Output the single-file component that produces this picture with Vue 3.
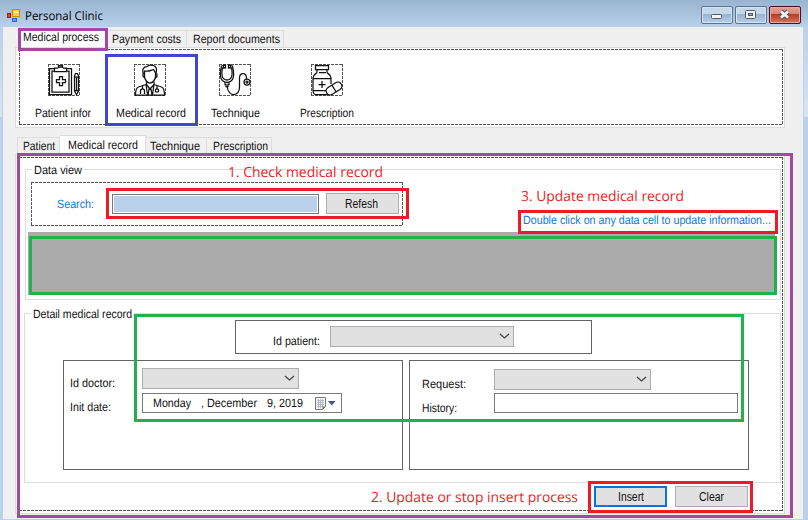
<script setup>
const mainTabs = [
  { text: 'Medical process', w: 76, cls: 'm1 active' },
  { text: 'Payment costs', w: 69, cls: 'm2' },
  { text: 'Report documents', w: 87, cls: 'm3' },
]
const subTabs = [
  { text: 'Patient', w: 32, cls: 's1' },
  { text: 'Medical record', w: 70, cls: 's2 active' },
  { text: 'Technique', w: 50, cls: 's3' },
  { text: 'Prescription', w: 55, cls: 's4' },
]

// Condenses a label horizontally so that it takes up the given width.
const vFit = {
  mounted(el, { value }) {
    const natural = el.getBoundingClientRect().width
    el.style.transform = `scaleX(${value / natural})`
    el.style.marginRight = value - natural + 'px'
  },
}
</script>

<template>
  <div class="window">
    <header class="titlebar">
      <svg class="app-icon" width="13" height="13" viewBox="0 0 13 13">
        <rect x="5.5" y=".5" width="7" height="7" fill="#ffd24a" stroke="#c98b0a" />
        <rect x="7" y="2" width="4" height="2" fill="#ffe897" />
        <rect x=".5" y="4.5" width="3" height="4" fill="#d8452f" stroke="#9d2014" />
        <rect x="5.5" y="9.5" width="4" height="3" fill="#5d9cf0" stroke="#2f66c4" />
      </svg>
      <span v-fit="78" class="title">Personal Clinic</span>
      <div class="controls">
        <div class="ctl">
          <svg width="30" height="16" viewBox="0 0 30 16"><rect x="9.5" y="7.5" width="10" height="4" rx="1" fill="#f4f4f4" stroke="#51596b" /></svg>
        </div>
        <div class="ctl">
          <svg width="30" height="16" viewBox="0 0 30 16"><rect x="9.5" y="3.5" width="10" height="8" rx="1" fill="#f4f4f4" stroke="#51596b" /><rect x="12.5" y="6.5" width="4" height="2" fill="#8fb0d2" stroke="#51596b" /></svg>
        </div>
        <div class="ctl close">
          <svg width="30" height="16" viewBox="0 0 30 16"><path d="M11 4.500l7 6M18 4.500l-7 6" stroke="#51596b" stroke-width="5" /><path d="M11 4.500l7 6M18 4.500l-7 6" stroke="#f3f3f3" stroke-width="2.8" /></svg>
        </div>
      </div>
    </header>

    <main class="client">
      <nav class="tabs main-tabs">
        <div v-for="t in mainTabs" :key="t.text" class="tab" :class="t.cls"><span v-fit="t.w">{{ t.text }}</span></div>
      </nav>
      <section class="page page-main">
        <div class="toolbar dashed">
          <div class="tool">
            <div class="icon dashed">
              <svg width="32" height="32" viewBox="0 0 32 32" class="ink">
                <path d="M7 4.500H1.500v26h22v-26H18M7 7H4v21h17V7h-3" />
                <path d="M6.500 7.500V4h3l1.500-1h3l1.500 1h3v3.500zM10.500 3V1.500h4V3" />
                <path d="M11.500 12.500h3v3h3v3h-3v3h-3v-3h-3v-3h3z" />
                <path d="M26.500 12l1-2.500h2l1 2.500v15l-2 3.500-2-3.500zM26.500 13h4M26.500 26.500h4M28.500 13v13" />
              </svg>
            </div>
            <span v-fit="56">Patient infor</span>
          </div>
          <div class="tool">
            <div class="icon dashed">
              <svg width="32" height="32" viewBox="0 0 32 32" class="ink">
                <path d="M9.500 10C7.500 5 10 2.500 13 2.500 16 0 22.500 1 22.500 6l-.5 4M10.500 9V7c4 1 7-1 9-1.500L21.500 9v3c0 4-3 7-5.500 7s-5.500-3-5.500-7zM9 9.500v3l1.500 1M23 9.500v3L21.500 14" />
                <path d="M12.500 17.500v3L16 25l4-4.500v-3M12 20.500L4.500 23C2 24 1.500 27 1.500 31h29c0-4-.5-7-3-8L20 20.500M12 20.500l1.500 10M20 20.500l-1.500 10M14 23l2 2 2-2M15 25l-1 6M17 25l1 6" />
                <path d="M8.500 22v3M6.500 30v-3c0-3 4-3 4 0v3M23 22v3" /><circle cx="23" cy="26.500" r="1.700" />
              </svg>
            </div>
            <span v-fit="70">Medical record</span>
          </div>
          <div class="tool">
            <div class="icon dashed">
              <svg width="32" height="32" viewBox="0 0 32 32" class="ink">
                <path d="M5 1.500L2.500 2C1 8 0 14 4 17q4 3 8 0c4-3 3-9 1.500-15L11 1.500M5.500 3.500L3.500 4c-1 5-1.500 9 1.500 11q3 2 6 0c3-2 2.500-6 1.500-11l-2-.5" />
                <rect x="4.500" y="1" width="2" height="3" /><rect x="9.500" y="1" width="2" height="3" />
                <path d="M6 18.500v2h1v2h2v-2h1v-2M8 22.500c1 5 3 8 6.500 8 4 0 6-3 6-8V14c0-6 7-6 7 0v1" />
                <circle cx="28" cy="18" r="3" /><circle cx="28" cy="18" r="1" />
              </svg>
            </div>
            <span v-fit="49">Technique</span>
          </div>
          <div class="tool">
            <div class="icon dashed">
              <svg width="32" height="32" viewBox="0 0 32 32" class="ink">
                <path d="M4.500 1.500h13v4h-13zM6 5.500V8c0 2-4 2-4 6v12c0 3 1 4.500 3 4.500h12M16 5.500V8c0 2 4 2 4 6v6M2 14.500h18M2 26.500h13M8 8.500h7" />
                <path d="M11 17v7M7.500 20.500h7" />
                <g transform="rotate(-32 23 24.500)"><rect x="14.500" y="20.500" width="17" height="8" rx="4" fill="#fff" /><path d="M23 20.500v8" /></g>
              </svg>
            </div>
            <span v-fit="54">Prescription</span>
          </div>
        </div>
      </section>

      <nav class="tabs sub-tabs">
        <div v-for="t in subTabs" :key="t.text" class="tab" :class="t.cls"><span v-fit="t.w">{{ t.text }}</span></div>
      </nav>
      <section class="page page-sub">
        <div class="content dashed">
          <section class="group data-view">
            <div class="legend"><span v-fit="48">Data view</span></div>
            <div class="search-row">
              <div class="search dashed">
                <label class="blue"><span v-fit="37">Search:</span></label>
                <div class="search-input"></div>
                <button class="btn"><span v-fit="33">Refesh</span></button>
              </div>
              <div class="hint blue"><span v-fit="248">Double click on any data cell to update information...</span></div>
            </div>
            <div class="grid"></div>
          </section>

          <section class="group detail">
            <div class="legend"><span v-fit="99">Detail medical record</span></div>
            <div class="patient-box">
              <label><span v-fit="47">Id patient:</span></label>
              <div class="combo wide"><svg width="11" height="7" viewBox="0 0 11 7"><path d="M1 1l4.500 4L10 1" /></svg></div>
            </div>
            <div class="panels">
              <div class="panel left">
                <div class="field">
                  <label><span v-fit="45">Id doctor:</span></label>
                  <div class="combo"><svg width="11" height="7" viewBox="0 0 11 7"><path d="M1 1l4.500 4L10 1" /></svg></div>
                </div>
                <div class="field">
                  <label><span v-fit="41">Init date:</span></label>
                  <div class="date">
                    <span v-fit="38">Monday</span>
                    <span v-fit="56">, December</span>
                    <span v-fit="36">9, 2019</span>
                    <svg width="21" height="14" viewBox="0 0 21 14">
                      <path d="M.5.5h10v9l-3 3h-7z" fill="#f5f5f5" stroke="#777" />
                      <path d="M2 3.500h7M2 5.500h7M2 7.500h7M2 9.500h5M3.500 2v9M5.500 2v9M7.500 2v8" stroke="#a9b2c0" stroke-width=".8" />
                      <path d="M7.500 12.500v-3h3z" fill="#666" />
                      <path d="M13 4h7.500l-3.700 4.500z" fill="#42578c" />
                    </svg>
                  </div>
                </div>
              </div>
              <div class="panel right">
                <div class="field">
                  <label><span v-fit="44">Request:</span></label>
                  <div class="combo"><svg width="11" height="7" viewBox="0 0 11 7"><path d="M1 1l4.500 4L10 1" /></svg></div>
                </div>
                <div class="field">
                  <label><span v-fit="35">History:</span></label>
                  <div class="textbox"></div>
                </div>
              </div>
            </div>
          </section>

          <div class="actions">
            <button class="btn primary"><span v-fit="26">Insert</span></button>
            <button class="btn"><span v-fit="25">Clear</span></button>
          </div>
        </div>
      </section>
    </main>

    <div class="mark purple mark-process"></div>
    <div class="mark indigo mark-tool"></div>
    <div class="mark purple mark-page"></div>
    <div class="mark red mark-search"></div>
    <div class="mark red mark-hint"></div>
    <div class="mark green mark-grid"></div>
    <div class="mark green mark-form"></div>
    <div class="mark red mark-actions"></div>
    <div class="note note-1"><span v-fit="155">1. Check medical record</span></div>
    <div class="note note-2"><span v-fit="207">2. Update or stop insert process</span></div>
    <div class="note note-3"><span v-fit="163">3. Update medical record</span></div>
  </div>
</template>

<style>
body { margin: 0; overflow: hidden; }
</style>

<style scoped>
.window, .window * { box-sizing: border-box; }
.window {
  position: relative;
  width: 808px;
  height: 520px;
  display: flex;
  flex-direction: column;
  overflow: hidden;
  font: 12px/16px "Liberation Sans", sans-serif;
  color: #111;
  white-space: nowrap;
  text-rendering: geometricPrecision;
  background:
    linear-gradient(#b9d1ea, #d9e5f3) 804px 27px / 4px 90px no-repeat,
    linear-gradient(#b9d1ea, #d9e5f3) 0 27px / 2px 90px no-repeat,
    #b9d1ea;
}
.window span { display: inline-block; flex: none; transform-origin: 0 50%; }
.titlebar {
  height: 27px;
  flex: none;
  display: flex;
  padding-left: 7px;
  background: linear-gradient(#99b4d1, #b9d1ea);
}
.app-icon { margin-top: 9px; }
.title { margin: 8px 0 0 5px; font-family: "Open Sans", sans-serif; font-size: 12px; color: #000; }
.controls { display: flex; gap: 2px; margin: 6px 7px 0 auto; }
.ctl {
  width: 32px;
  height: 18px;
  border: 1px solid #5f7186;
  border-radius: 2px;
  box-shadow: inset 0 0 0 1px #d5e4f3;
  background: linear-gradient(#c5d8eb 0 45%, #98b3cf 46%, #b7d0e9);
}
.ctl svg { display: block; fill: none; }
.close {
  border-color: #43141d;
  box-shadow: inset 0 0 0 1px #e6aaa0;
  background: linear-gradient(#e5a195, #d98372 45%, #b83a22 46%, #d5765f);
}
.client {
  width: 800px;
  height: 492px;
  margin-left: 3px;
  padding: 1px 0 0 12px;
  background: #f0f0f0;
}
.tabs { display: flex; align-items: flex-end; padding-left: 2px; }
.main-tabs { height: 19px; padding-left: 3px; }
.sub-tabs { height: 18px; margin-top: 7px; }
.tab { height: 17px; border: 1px solid #dcdcdc; border-bottom: 0; border-left: 0; line-height: 17px; }
.sub-tabs .tab { height: 16px; }
.tab.active { background: #fff; }
.main-tabs .tab.active { height: 20px; line-height: 18px; }
.sub-tabs .tab.active { height: 18px; line-height: 19px; }
.m1 { width: 90px; padding-left: 5px; }
.m2 { width: 79px; padding-left: 4px; }
.m3 { width: 97px; padding-left: 6px; }
.s1 { width: 43px; padding-left: 5px; }
.sub-tabs .s1 { border-left: 1px solid #dcdcdc; }
.s2 { width: 86px; padding-left: 8px; }
.s3 { width: 61px; padding-left: 4px; }
.s4 { width: 65px; padding-left: 6px; }
.page { width: 770px; border: 1px solid #dcdcdc; background: #fff; }
.page-main { height: 81px; padding: 1px 1px 2px 3px; }
.page-sub { height: 361px; padding: 3px 1px 2px 3px; }
.dashed {
  --h: repeating-linear-gradient(90deg, #555 0 3px, transparent 3px 4px);
  --v: repeating-linear-gradient(#555 0 3px, transparent 3px 4px);
  border: 1px solid transparent;
  background:
    var(--h) 0 0 / 100% 1px no-repeat border-box,
    var(--h) 0 100% / 100% 1px no-repeat border-box,
    var(--v) 0 0 / 1px 100% no-repeat border-box,
    var(--v) 100% 0 / 1px 100% no-repeat border-box;
}
.toolbar { height: 76px; display: grid; grid-template-columns: 88px 84px 86px 98px; padding-top: 14px; }
.tool { display: flex; flex-direction: column; align-items: center; }
.tool:first-child span { left: -1px; position: relative; }
.tool:nth-child(2) span { left: 1px; position: relative; }
.tool span { margin-top: 9px; }
.icon { width: 32px; height: 32px; }
.icon svg { display: block; margin: -1px; }
.ink { fill: none; stroke: #111; stroke-width: 1.25; }
.content { height: 354px; padding-left: 4px; }
.group { border: 1px solid #dcdcdc; }
.data-view { width: 756px; height: 131px; margin: 11px 0 0 1px; }
.legend { width: max-content; height: 16px; margin: -8px 0 0 6px; padding: 0 2px; background: #fff; }
.search-row { display: flex; height: 44px; margin: 4px 0 0 5px; }
.search { width: 372px; display: flex; padding: 10px 0 0 25px; }
.search label { width: 55px; padding-top: 3px; }
.blue { color: #0f78d4; }
.search-input { width: 207px; height: 20px; margin-top: 1px; border: 1px solid #777; background: #b9d1ea; box-shadow: inset 0 0 0 1px #fff; }
.btn {
  width: 73px;
  height: 21px;
  padding: 0;
  border: 1px solid #adadad;
  background: #e1e1e1;
  font: inherit;
  color: #111;
}
.search .btn { margin-left: 7px; padding-right: 2px; }
.hint { margin: 30px 0 0 120px; }
.grid { width: 747px; height: 63px; margin: 6px 0 0 2px; background: #ababab; }
.detail { width: 757px; height: 170px; margin-top: 13px; }
.patient-box { display: flex; width: 357px; height: 34px; margin: -2px 0 0 210px; padding: 5px 0 0 37px; border: 1px solid #646464; }
.patient-box label { width: 57px; padding-top: 7px; }
.combo {
  width: 157px;
  height: 21px;
  display: flex;
  justify-content: flex-end;
  align-items: center;
  padding-right: 3px;
  border: 1px solid #adadad;
  background: #e1e1e1;
}
.combo svg { fill: none; stroke: #444; stroke-width: 1.3; }
.wide { width: 184px; }
.panels { display: flex; gap: 6px; margin: 6px 0 0 38px; }
.panel { width: 340px; height: 110px; border: 1px solid #646464; display: flex; flex-direction: column; }
.left { padding: 7px 0 0 6px; gap: 4px; }
.right { padding: 8px 0 0 12px; gap: 3px; }
.field { display: flex; height: 21px; }
.field + .field { height: 20px; }
.field label { width: 72px; padding-top: 7px; }
.left .field + .field label { padding-top: 6px; }
.date { width: 200px; height: 20px; display: flex; gap: 10px; padding: 1px 0 0 10px; border: 1px solid #7a7a7a; background: #fff; }
.date svg { margin: 2px 0 0 2px; }
.textbox { width: 244px; height: 20px; border: 1px solid #7a7a7a; background: #fff; }
.actions { display: flex; gap: 8px; margin: 3px 0 0 570px; }
.primary { border: 2px solid #0078d7; }
.mark { position: absolute; border: 3px solid; }
.purple { border-color: #a349a4; }
.indigo { border-color: #3f48cc; }
.red { border-color: #ed1c24; }
.green { border-color: #22b14c; }
.mark-process { left: 18px; top: 28px; width: 90px; height: 23px; }
.mark-tool { left: 105px; top: 54px; width: 93px; height: 72px; }
.mark-page { left: 17px; top: 153px; width: 776px; height: 365px; }
.mark-search { left: 106px; top: 188px; width: 303px; height: 31px; }
.mark-hint { left: 518px; top: 210px; width: 260px; height: 24px; }
.mark-grid { left: 29px; top: 236px; width: 748px; height: 59px; }
.mark-form { left: 134px; top: 314px; width: 610px; height: 108px; }
.mark-actions { left: 588px; top: 481px; width: 165px; height: 32px; }
.note { position: absolute; font: 14px/20px "Open Sans", sans-serif; color: #ed1c24; }
.note-1 { left: 228px; top: 163px; }
.note-2 { left: 371px; top: 488px; }
.note-3 { left: 521px; top: 187px; }
</style>
